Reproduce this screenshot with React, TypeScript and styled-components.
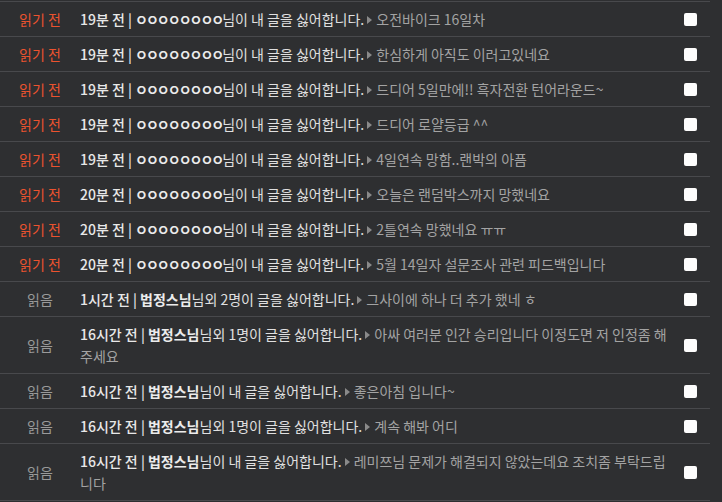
import styled, { createGlobalStyle } from 'styled-components';

type Notice = {
  read: boolean;
  time: string;
  name: string;
  action: string;
  title: string;
};

const notices: Notice[] = [
  { read: false, time: '19분 전', name: 'ㅇㅇㅇㅇㅇㅇㅇㅇ', action: '님이 내 글을 싫어합니다.', title: '오전바이크 16일차' },
  { read: false, time: '19분 전', name: 'ㅇㅇㅇㅇㅇㅇㅇㅇ', action: '님이 내 글을 싫어합니다.', title: '한심하게 아직도 이러고있네요' },
  { read: false, time: '19분 전', name: 'ㅇㅇㅇㅇㅇㅇㅇㅇ', action: '님이 내 글을 싫어합니다.', title: '드디어 5일만에!! 흑자전환 턴어라운드~' },
  { read: false, time: '19분 전', name: 'ㅇㅇㅇㅇㅇㅇㅇㅇ', action: '님이 내 글을 싫어합니다.', title: '드디어 로얄등급 ^^' },
  { read: false, time: '19분 전', name: 'ㅇㅇㅇㅇㅇㅇㅇㅇ', action: '님이 내 글을 싫어합니다.', title: '4일연속 망함..랜박의 아픔' },
  { read: false, time: '20분 전', name: 'ㅇㅇㅇㅇㅇㅇㅇㅇ', action: '님이 내 글을 싫어합니다.', title: '오늘은 랜덤박스까지 망했네요' },
  { read: false, time: '20분 전', name: 'ㅇㅇㅇㅇㅇㅇㅇㅇ', action: '님이 내 글을 싫어합니다.', title: '2틀연속 망했네요 ㅠㅠ' },
  { read: false, time: '20분 전', name: 'ㅇㅇㅇㅇㅇㅇㅇㅇ', action: '님이 내 글을 싫어합니다.', title: '5월 14일자 설문조사 관련 피드백입니다' },
  { read: true, time: '1시간 전', name: '법정스님', action: '님외 2명이 글을 싫어합니다.', title: '그사이에 하나 더 추가 했네 ㅎ' },
  { read: true, time: '16시간 전', name: '법정스님', action: '님외 1명이 글을 싫어합니다.', title: '아싸 여러분 인간 승리입니다 이정도면 저 인정좀 해주세요' },
  { read: true, time: '16시간 전', name: '법정스님', action: '님이 내 글을 싫어합니다.', title: '좋은아침 입니다~' },
  { read: true, time: '16시간 전', name: '법정스님', action: '님외 1명이 글을 싫어합니다.', title: '계속 해봐 어디' },
  { read: true, time: '16시간 전', name: '법정스님', action: '님이 내 글을 싫어합니다.', title: '레미쯔님 문제가 해결되지 않았는데요 조치좀 부탁드립니다' },
];

export default function App() {
  return (
    <>
      <GlobalStyle />
      <List>
        {notices.map((n, i) => (
          <Row key={i}>
            <Status read={n.read}>{n.read ? '읽음' : '읽기 전'}</Status>
            <Content>
              <Time>{n.time} | </Time>
              <Name tight={!n.read}>{n.name}</Name>
              <Action>{n.action}</Action>
              <Arrow />
              <Title>{n.title}</Title>
            </Content>
            <CheckCell>
              <Check type="checkbox" />
            </CheckCell>
          </Row>
        ))}
      </List>
    </>
  );
}

const GlobalStyle = createGlobalStyle`
  html, body {
    margin: 0;
    background: #2e2f31;
  }
  body {
    font-family: "Noto Sans CJK KR", "Noto Sans", sans-serif;
    font-size: 14px;
    color: #e2e2e2;
  }
`;

const List = styled.div`
  width: 710px;
  padding-top: 1px;
`;

const Row = styled.div`
  display: grid;
  grid-template-columns: 80px 1fr 42px;
  align-items: center;
  border-top: 1px solid #48494c;
  padding: 6px 0;
  line-height: 22px;

  &:last-child {
    border-bottom: 1px solid #48494c;
  }
`;

const Status = styled.div<{ read: boolean }>`
  text-align: center;
  color: ${(p) => (p.read ? '#9a9a9a' : '#ec532f')};
`;

const Content = styled.div`
  padding-right: 0;
`;

const Time = styled.span`
  font-weight: 500;
  color: #e8e8e8;
`;

const Name = styled.span<{ tight: boolean }>`
  font-weight: 700;
  letter-spacing: ${(p) => (p.tight ? '-2px' : '0')};
  color: #ececec;
`;

const Action = styled.span`
  color: #e0e0e0;
`;

const Arrow = styled.span`
  display: inline-block;
  width: 0;
  height: 0;
  margin: 0 4px 1px 3px;
  border-top: 4px solid transparent;
  border-bottom: 4px solid transparent;
  border-left: 5px solid #8a8a8a;
`;

const Title = styled.span`
  color: #a3a3a3;
`;

const CheckCell = styled.div`
  display: flex;
  justify-content: center;
  padding-left: 2px;
`;

const Check = styled.input`
  appearance: none;
  width: 13px;
  height: 13px;
  margin: 0;
  border-radius: 2px;
  background: #fdfdfd;
`;
